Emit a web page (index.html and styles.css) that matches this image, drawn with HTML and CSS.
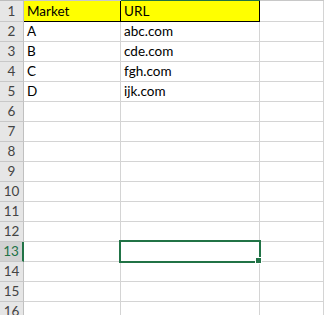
FILE: index.html
```html
<!DOCTYPE html>
<html lang="en">
<head>
  <meta charset="UTF-8" />
  <title>Sheet1</title>
  <link rel="stylesheet" href="styles.css">
</head>
<body>
  <div class="viewport">
    <div class="sheet" id="sheet">
      <div class="edge edge-head"></div>
      <div class="edge"></div>
      <div class="edge edge-active"></div>
      <div class="edge"></div>
    </div>
  </div>

  <script>
    const data = [
      ["Market", "URL"],
      ["A", "abc.com"],
      ["B", "cde.com"],
      ["C", "fgh.com"],
      ["D", "ijk.com"]
    ];
    const sheet = document.getElementById("sheet");

    for (let r = 1; r <= 16; r++) {
      const row = data[r - 1] || [];
      const head = document.createElement("div");
      head.className = "rowhead" + (r === 13 ? " active" : "");
      head.textContent = r;
      sheet.appendChild(head);

      for (let c = 0; c < 3; c++) {
        const cell = document.createElement("div");
        cell.className = "cell";
        if (r === 1 && c < 2) cell.className += " title";
        cell.textContent = row[c] || "";
        sheet.appendChild(cell);
      }
    }

    const sel = document.createElement("div");
    sel.className = "selection";
    sel.innerHTML = '<span class="handle"></span>';
    sheet.appendChild(sel);
  </script>
</body>
</html>
```

FILE: styles.css
```css
body {
  margin: 0;
  background: #fff;
  font-family: Lato, "Open Sans", sans-serif;
}
.viewport {
  height: 315px;
  overflow: hidden;
}
.sheet {
  position: relative;
  display: grid;
  grid-template-columns: 24px 97px 139px 64px;
  grid-template-rows: 1px 21px;
  grid-auto-rows: 20px;
  width: 324px;
}
.edge {
  background: #c8c8c8;
}
.edge-head {
  background: #bdbdbd;
}
.edge-active {
  background: #217346;
}
.rowhead, .cell {
  box-sizing: border-box;
  border-right: 1px solid #d4d4d4;
  border-bottom: 1px solid #d4d4d4;
  display: flex;
  align-items: flex-end;
  padding-bottom: 2px;
  font-size: 13.5px;
  line-height: 15px;
  white-space: nowrap;
  overflow: hidden;
}
.rowhead {
  background: #e6e6e6;
  border-right-color: #c0c0c0;
  border-bottom-color: #c8c8c8;
  justify-content: center;
  color: #444;
}
.rowhead.active {
  background: #d2d2d2;
  color: #217346;
  border-right: 2px solid #217346;
}
.cell {
  padding-left: 3px;
  color: #000;
}
.cell.title {
  background: #ffff00;
  border-right-color: #000;
  border-bottom-color: #000;
}
.selection {
  position: absolute;
  left: 119px;
  top: 240px;
  width: 142px;
  height: 23px;
  box-sizing: border-box;
  border: 2px solid #217346;
}
.handle {
  position: absolute;
  right: -3px;
  bottom: -3px;
  width: 5px;
  height: 5px;
  background: #217346;
  border: 1px solid #fff;
}
```
